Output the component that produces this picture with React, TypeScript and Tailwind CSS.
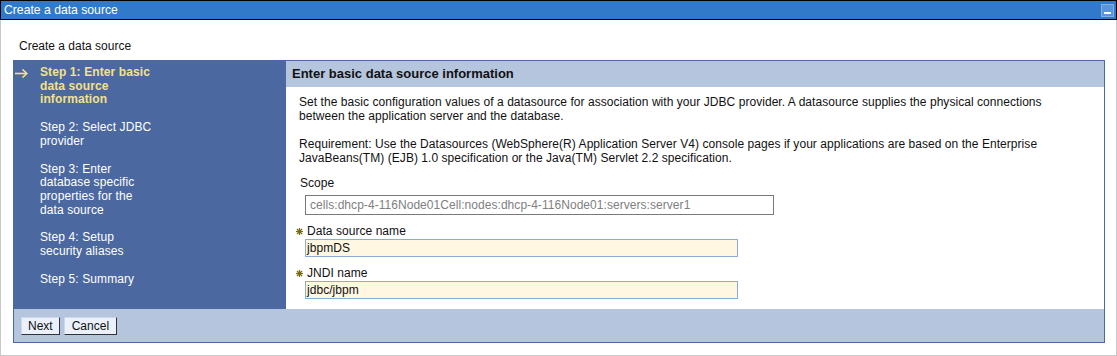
import React from "react";

const steps = [
  { label: "Step 1: Enter basic data source information", active: true },
  { label: "Step 2: Select JDBC provider" },
  { label: "Step 3: Enter database specific properties for the data source" },
  { label: "Step 4: Setup security aliases" },
  { label: "Step 5: Summary" },
];

function Star() {
  return (
    <svg width="7" height="7" viewBox="0 0 7 7" className="shrink-0">
      <g stroke="#7a6a10" strokeWidth="1.2">
        <line x1="3.5" y1="0" x2="3.5" y2="7" />
        <line x1="0" y1="3.5" x2="7" y2="3.5" />
        <line x1="1" y1="1" x2="6" y2="6" />
        <line x1="6" y1="1" x2="1" y2="6" />
      </g>
    </svg>
  );
}

export default function App() {
  return (
    <div className="w-[1117px] h-[356px] bg-white text-[12px] text-[#111] font-['Liberation_Sans',Arial,sans-serif] flex flex-col">
      {/* Window title bar */}
      <div className="h-[20px] shrink-0 bg-[#3179c9] border border-black flex items-center justify-between pl-[3px] pr-[2px]">
        <span className="text-white leading-none text-[12.2px]">Create a data source</span>
        <div className="w-[13px] h-[13px] bg-[#5b95d6] border border-[#7fb0e6] flex items-end justify-center pb-[2px]">
          <div className="w-[7px] h-[2px] bg-white" />
        </div>
      </div>

      <div className="flex-1 border-x border-b border-[#c8c8c8] pl-[12px] pr-[11px]">
        <div className="pt-[19px] pl-[6px] leading-[14px]">Create a data source</div>

        {/* Wizard */}
        <div className="mt-[7px] flex">
          <div className="w-[273px] h-[249px] bg-[#4b68a0] pt-[6px] pl-[2px]">
            {steps.map((s) => (
              <div key={s.label} className="flex mb-[14px]">
                <div className="w-[25px] h-[14px] flex items-center">
                  {s.active && (
                    <svg width="13" height="9" viewBox="0 0 13 9">
                      <g stroke="#f3e287" strokeWidth="1.6" fill="none">
                        <line x1="0" y1="4.5" x2="12" y2="4.5" />
                        <polyline points="7.5,0.5 11.8,4.5 7.5,8.5" />
                      </g>
                    </svg>
                  )}
                </div>
                <div
                  className={
                    s.active
                      ? "w-[112px] leading-[13.7px] font-bold text-[#f3e287] tracking-[0.1px]"
                      : "w-[112px] leading-[13.7px] text-white tracking-[0.1px]"
                  }
                >
                  {s.label}
                </div>
              </div>
            ))}
          </div>

          <div className="flex-1 h-[249px] border-t border-r border-[#4b68a0]">
            <div className="h-[26px] bg-[#b5c5de] flex items-center pl-[6px] font-bold text-[13px]">
              Enter basic data source information
            </div>
            <div className="pl-[13px] pt-[8px] leading-[14px] tracking-[0.05px]">
              <p className="w-[780px]">
                Set the basic configuration values of a datasource for association with your JDBC provider. A datasource supplies the physical connections between the application server and the database.
              </p>
              <p className="w-[780px] mt-[14px]">
                Requirement: Use the Datasources (WebSphere(R) Application Server V4) console pages if your applications are based on the Enterprise JavaBeans(TM) (EJB) 1.0 specification or the Java(TM) Servlet 2.2 specification.
              </p>

              <div className="mt-[11px] pl-[1px]">Scope</div>
              <div className="mt-[5px] ml-[6px] w-[469px] h-[20px] border border-[#7a7a7a] flex items-center pl-[4px] text-[#808080]">
                cells:dhcp-4-116Node01Cell:nodes:dhcp-4-116Node01:servers:server1
              </div>

              <div className="mt-[9px] -ml-[3px] flex items-center gap-[4px]">
                <Star />
                <span>Data source name</span>
              </div>
              <div className="mt-[1px] ml-[6px] w-[433px] h-[18px] bg-[#fff7e1] border border-[#8aaed6] flex items-center pl-[1px]">
                jbpmDS
              </div>

              <div className="mt-[9px] -ml-[3px] flex items-center gap-[4px]">
                <Star />
                <span>JNDI name</span>
              </div>
              <div className="mt-[1px] ml-[6px] w-[433px] h-[18px] bg-[#fff7e1] border border-[#8aaed6] flex items-center pl-[1px]">
                jdbc/jbpm
              </div>
            </div>
          </div>
        </div>

        {/* Footer */}
        <div className="h-[34px] bg-[#b5c5de] border-x border-b border-[#4b68a0] flex items-center gap-[4px] pl-[7px] pt-[1px]">
          <button className="h-[18px] px-[6px] bg-[#eaf1fd] border border-t-[#d0d8e4] border-l-[#d0d8e4] border-b-[#333] border-r-[#333] leading-none">
            Next
          </button>
          <button className="h-[18px] px-[7px] bg-[#eaf1fd] border border-t-[#d0d8e4] border-l-[#d0d8e4] border-b-[#333] border-r-[#333] leading-none">
            Cancel
          </button>
        </div>
      </div>
    </div>
  );
}
